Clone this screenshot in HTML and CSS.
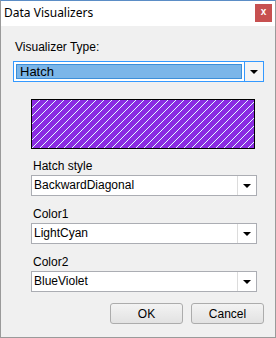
FILE: index.html
```html
<!DOCTYPE html>
<html>
<head>
    <meta charset="UTF-8">
    <title>Data Visualizers</title>
    <link rel="stylesheet" href="styles.css">
</head>
<body>
    <div class="dialog">
        <div class="titlebar">
            <span class="title">Data Visualizers</span>
            <span class="close-btn">x</span>
        </div>
        <div class="content">
            <div class="label top-label">Visualizer Type:</div>
            <div class="combo combo-focus">
                <div class="combo-value"><span class="selected">Hatch</span></div>
                <div class="combo-btn"><span class="arrow"></span></div>
            </div>

            <div class="settings">
                <div class="swatch">
                    <svg width="100%" height="100%">
                        <defs>
                            <pattern id="hatch" width="8" height="8" patternUnits="userSpaceOnUse">
                                <rect width="8" height="8" fill="#8a2be2"/>
                                <g fill="#e0ffff" shape-rendering="crispEdges">
                                    <rect x="0" y="7" width="1" height="1"/>
                                    <rect x="1" y="6" width="1" height="1"/>
                                    <rect x="2" y="5" width="1" height="1"/>
                                    <rect x="3" y="4" width="1" height="1"/>
                                    <rect x="4" y="3" width="1" height="1"/>
                                    <rect x="5" y="2" width="1" height="1"/>
                                    <rect x="6" y="1" width="1" height="1"/>
                                    <rect x="7" y="0" width="1" height="1"/>
                                </g>
                            </pattern>
                        </defs>
                        <rect width="100%" height="100%" fill="url(#hatch)"/>
                    </svg>
                </div>

                <div class="label field-label">Hatch style</div>
                <div class="combo">
                    <div class="combo-value">BackwardDiagonal</div>
                    <div class="combo-btn"><span class="arrow"></span></div>
                </div>

                <div class="label field-label">Color1</div>
                <div class="combo">
                    <div class="combo-value">LightCyan</div>
                    <div class="combo-btn"><span class="arrow"></span></div>
                </div>

                <div class="label field-label">Color2</div>
                <div class="combo">
                    <div class="combo-value">BlueViolet</div>
                    <div class="combo-btn"><span class="arrow"></span></div>
                </div>
            </div>

            <div class="buttons">
                <button class="btn">OK</button>
                <button class="btn">Cancel</button>
            </div>
        </div>
    </div>
</body>
</html>
```

FILE: styles.css
```css
body {
    margin: 0;
    font-family: "Liberation Sans", Arial, sans-serif;
    font-size: 12px;
    color: #000;
    background: #f0f0f0;
}
.dialog {
    width: 276px;
    height: 338px;
    box-sizing: border-box;
    border: 1px solid #9a9a9a;
    border-top-color: #5b8dc6;
    background: #f0f0f0;
    display: flex;
    flex-direction: column;
}
.titlebar {
    height: 25px;
    background: #fff;
    display: flex;
    justify-content: space-between;
    align-items: flex-start;
}
.title {
    font-family: "Noto Sans", "Liberation Sans", sans-serif;
    font-size: 12px;
    padding: 4px 0 0 3px;
    line-height: 16px;
}
.close-btn {
    width: 17px;
    height: 18px;
    margin: 3px 3px 0 0;
    background: #c75050;
    color: #fff;
    font-weight: bold;
    font-size: 10px;
    line-height: 16px;
    text-align: center;
}
.content {
    padding: 14px 11px 0 12px;
    display: flex;
    flex-direction: column;
}
.label {
    line-height: 14px;
}
.top-label {
    padding-left: 2px;
}
.combo {
    height: 21px;
    box-sizing: border-box;
    border: 1px solid #abadb3;
    background: #fff;
    display: flex;
}
.combo-value {
    flex: 1;
    padding-left: 2px;
    line-height: 19px;
}
.combo-btn {
    width: 18px;
    border-left: 1px solid #dcdcdc;
    display: flex;
    align-items: center;
    justify-content: center;
}
.arrow {
    width: 0;
    height: 0;
    border-left: 4px solid transparent;
    border-right: 4px solid transparent;
    border-top: 4px solid #000;
    margin-top: 1px;
}
.combo-focus {
    margin-top: 7px;
    border-color: #3399ff;
    border-width: 1px;
}
.combo-focus .combo-value {
    padding: 2px;
    display: flex;
}
.combo-focus .selected {
    flex: 1;
    background: #7bb6e9;
    border: 1px solid #3c8fd9;
    line-height: 13px;
    padding-left: 3px;
    font-size: 13px;
}
.combo-focus .combo-btn {
    border-left-color: #3399ff;
    background: #f4f4f4;
}
.settings {
    padding: 0 7px 0 18px;
    display: flex;
    flex-direction: column;
}
.swatch {
    margin-top: 17px;
    height: 50px;
    margin-right: 2px;
    box-sizing: border-box;
    border: 1px solid #000;
}
.swatch svg {
    display: block;
}
.field-label {
    margin-top: 11px;
    margin-bottom: 2px;
    padding-left: 2px;
}
.swatch + .field-label {
    margin-top: 10px;
}
.buttons {
    margin-top: 11px;
    display: flex;
    justify-content: flex-end;
    gap: 8px;
}
.btn {
    width: 73px;
    height: 21px;
    font-family: "Liberation Sans", Arial, sans-serif;
    font-size: 12px;
    background: linear-gradient(#f3f3f3, #e2e2e2);
    border: 1px solid #acacac;
    border-radius: 3px;
    padding: 0;
}
```
